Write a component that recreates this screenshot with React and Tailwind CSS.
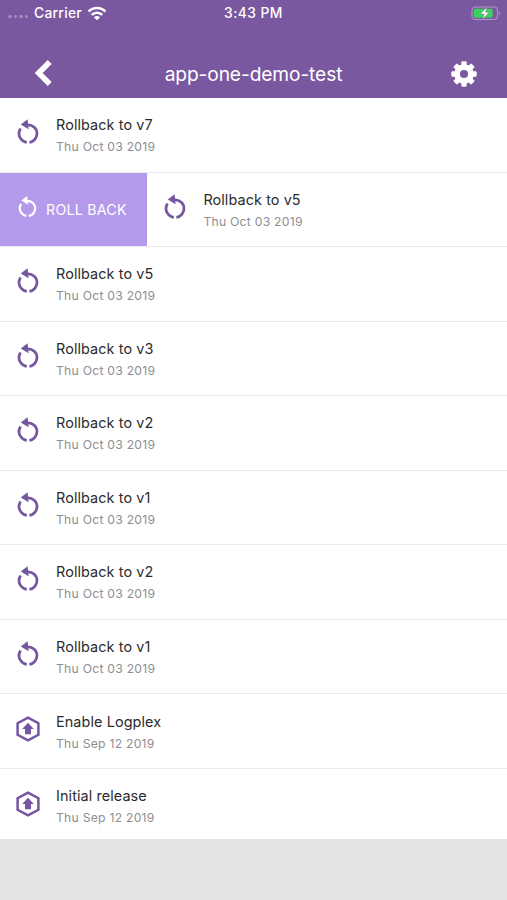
const releases = [
  { title: 'Rollback to v7', date: 'Thu Oct 03 2019' },
  { title: 'Rollback to v5', date: 'Thu Oct 03 2019', swiped: true },
  { title: 'Rollback to v5', date: 'Thu Oct 03 2019' },
  { title: 'Rollback to v3', date: 'Thu Oct 03 2019' },
  { title: 'Rollback to v2', date: 'Thu Oct 03 2019' },
  { title: 'Rollback to v1', date: 'Thu Oct 03 2019' },
  { title: 'Rollback to v2', date: 'Thu Oct 03 2019' },
  { title: 'Rollback to v1', date: 'Thu Oct 03 2019' },
  { title: 'Enable Logplex', date: 'Thu Sep 12 2019', deploy: true },
  { title: 'Initial release', date: 'Thu Sep 12 2019', deploy: true },
];

function RollbackIcon({ className }) {
  return (
    <svg viewBox="0 0 24 28" className={className} fill="none" stroke="currentColor" strokeWidth="2.7">
      <path d="M11 7 C17 6.5 21 10.8 21 15.6 C21 20.2 17.5 23.8 13.4 24.4" />
      <path d="M4.6 10.4 C2.5 13.6 2.7 17.8 4.8 20.8 C6.2 22.8 8.2 24 10.8 24.4" />
      <path d="M4.8 6.5 L11.6 1.3 L12.6 11.3 Z" fill="currentColor" stroke="none" />
    </svg>
  );
}

function DeployIcon() {
  return (
    <svg viewBox="0 0 24 26" className="h-[26px] w-6" fill="none">
      <path d="M12 1.6 L22.4 7.2 V18.8 L12 24.4 L1.6 18.8 V7.2 Z" stroke="currentColor" strokeWidth="2.5" />
      <path d="M12 6.7 L17.8 12.9 H15 V18.2 H9 V12.9 H6.2 Z" fill="currentColor" />
    </svg>
  );
}

function WifiIcon() {
  return (
    <svg viewBox="0 0 20 15" className="ml-[5px] h-[15px] w-5" fill="none" stroke="white" strokeWidth="2.5">
      <path d="M1.6 5.5 C6.2 .9 13.8 .9 18.4 5.5" />
      <path d="M4.7 8.8 C7.6 5.9 12.4 5.9 15.3 8.8" />
      <path d="M10 14.3 L7 11.3 C8.6 9.7 11.4 9.7 13 11.3 Z" fill="white" stroke="none" />
    </svg>
  );
}

function BatteryIcon() {
  return (
    <svg viewBox="0 0 30 15" className="h-[15px] w-[30px]">
      <rect x="1" y="1" width="25.5" height="12.5" rx="3.5" fill="none" stroke="#ad98c8" strokeWidth="1.1" />
      <path d="M28 5 Q30 7.2 28 9.4 Z" fill="#ad98c8" />
      <rect x="2.7" y="2.7" width="19" height="9.1" rx="2" fill="#3bd15c" />
      <path d="M15.8 1.3 L9.4 8 H13.2 L11.8 13 L18.3 6.3 H14.6 Z" fill="white" stroke="#7a6a94" strokeWidth=".4" />
    </svg>
  );
}

function GearIcon() {
  return (
    <svg viewBox="0 0 26 26" className="h-[26px] w-[26px]" fill="white">
      <g>
        {[0, 45, 90, 135].map((a) => (
          <rect key={a} x="10.3" y="0.3" width="5.4" height="25.4" rx="1.1" transform={`rotate(${a} 13 13)`} />
        ))}
      </g>
      <circle cx="13" cy="13" r="9.8" />
      <circle cx="13" cy="13" r="4.1" fill="#79589f" />
    </svg>
  );
}

function ReleaseRow({ release }) {
  return (
    <li className="flex h-[74.53px] shrink-0 border-b border-[#ececee] bg-white">
      {release.swiped && (
        <button className="flex w-[147.4px] shrink-0 items-center bg-[#b59aeb] pl-[17px] text-white">
          <RollbackIcon className="-mt-1 h-6 w-[21px]" />
          <span className="ml-2 whitespace-nowrap text-[14.2px] tracking-[0.25px]">ROLL BACK</span>
        </button>
      )}
      <div className="flex">
        <div className="flex w-14 justify-center pt-5 text-[#7556a0]">
          {release.deploy ? <div className="pt-[2px]"><DeployIcon /></div> : <RollbackIcon className="h-7 w-6" />}
        </div>
        <div className="whitespace-nowrap pt-[17.4px]">
          <div className="text-[14.4px] leading-5 tracking-[0.1px] text-[#2b2b2e]">{release.title}</div>
          <div className="mt-[3px] text-[12.2px] leading-[18px] tracking-[0.24px] text-[#8e8e91]">{release.date}</div>
        </div>
      </div>
    </li>
  );
}

export default function App() {
  return (
    <main className="flex h-[900px] w-[507px] flex-col overflow-hidden bg-[#e3e3e3] font-['Inter',sans-serif]">
      <header className="h-[98px] shrink-0 bg-[#79589f] text-white">
        <div className="grid h-[26px] grid-cols-3 items-center text-[13.8px] font-medium">
          <div className="flex items-center pl-2">
            <div className="mt-[7px] flex gap-[2px]">
              {[0, 1, 2, 3].map((i) => (
                <i key={i} className="h-[3.5px] w-[3.5px] rounded-full bg-[#a48bbe]" />
              ))}
            </div>
            <span className="ml-[6px] tracking-[0.3px]">Carrier</span>
            <WifiIcon />
          </div>
          <div className="text-center tracking-[0.45px]">3:43 PM</div>
          <div className="flex justify-end pr-[6px]"><BatteryIcon /></div>
        </div>
        <div className="grid h-[72px] grid-cols-[80px_1fr_80px] items-center pt-6">
          <button className="-mt-0.5 pl-[34px]">
            <svg viewBox="0 0 20 28" className="h-7 w-5" fill="none" stroke="white" strokeWidth="5.6">
              <path d="M15.7 3 L4.7 14 L15.7 25" />
            </svg>
          </button>
          <h1 className="text-center text-[19.2px] tracking-[-0.12px]">app-one-demo-test</h1>
          <button className="pl-6"><GearIcon /></button>
        </div>
      </header>
      <ul className="flex h-[741px] shrink-0 flex-col overflow-hidden">
        {releases.map((release, i) => <ReleaseRow key={i} release={release} />)}
      </ul>
    </main>
  );
}
